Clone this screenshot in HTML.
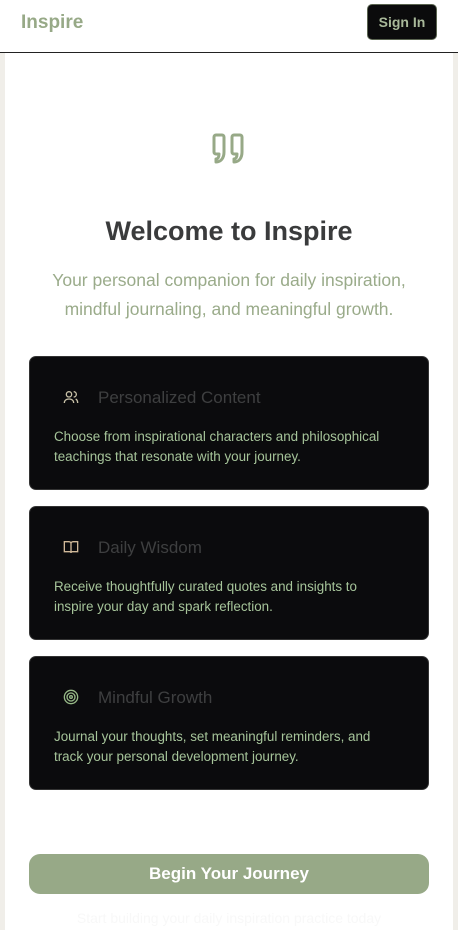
<!DOCTYPE html>
<html><head><meta charset="utf-8"><style>
*{box-sizing:border-box;margin:0;padding:0}
body{width:458px;height:930px;overflow:hidden;background:#f0eee9;font-family:"Liberation Sans",sans-serif;position:relative}
.hdr{position:absolute;left:0;top:0;width:458px;height:53px;background:#fff;border-bottom:1.5px solid #222}
.logo{position:absolute;left:21px;top:12px;font-size:19px;font-weight:bold;color:#97a987}
.sign{position:absolute;left:367px;top:4px;width:70px;height:36px;background:#0b0b0c;border:1px solid #5a6450;border-radius:5px;color:#a9b99a;font-weight:bold;font-size:14px;text-align:center;line-height:34px}
.panel{position:absolute;left:5px;top:53px;width:448px;height:877px;background:#fff}
.q{position:absolute;left:211px;top:132px}
h1{position:absolute;left:0;width:458px;top:216px;text-align:center;font-size:27px;color:#3a3b3c}
.sub{position:absolute;left:0;width:458px;top:266px;text-align:center;font-size:17.5px;line-height:29px;color:#9aab8a}
.card{position:absolute;left:29px;width:400px;height:134px;background:#0b0b0d;border-radius:7px;border:1px solid #333}
.card svg{position:absolute;left:33px;top:32px}
.ct{position:absolute;left:68px;top:31px;font-size:17px;color:#3e3f40}
.cd{position:absolute;left:24px;top:70px;width:345px;font-size:13.4px;line-height:20px;color:#a6c49a}
.btn{position:absolute;left:29px;top:854px;width:400px;height:40px;background:#97a987;border-radius:11px;color:#fff;font-weight:bold;font-size:17px;text-align:center;line-height:40px}
.foot{position:absolute;left:0;width:458px;top:910px;text-align:center;font-size:14px;color:#f8f8f8}
</style></head><body>
<div class="hdr"><div class="logo">Inspire</div><div class="sign">Sign In</div></div>
<div class="panel"></div>
<svg class="q" width="36" height="34" viewBox="0 0 36 34" fill="none" stroke="#97a987" stroke-width="3" stroke-linejoin="round" stroke-linecap="round"><path d="M5 3h6a2 2 0 012 2v15c0 6-3 10-8 10v-3c2 0 3-2 3-5H5a2 2 0 01-2-2V5a2 2 0 012-2z"/><path d="M23 3h6a2 2 0 012 2v15c0 6-3 10-8 10v-3c2 0 3-2 3-5h-3a2 2 0 01-2-2V5a2 2 0 012-2z"/></svg>
<h1>Welcome to Inspire</h1>
<div class="sub">Your personal companion for daily inspiration,<br>mindful journaling, and meaningful growth.</div>
<div class="card" style="top:356px"><svg width="16" height="16" viewBox="0 0 24 24" fill="none" stroke="#c9c2a8" stroke-width="2"><circle cx="9" cy="8" r="4"/><path d="M2 21c0-4 3-6 7-6s7 2 7 6M16 4a4 4 0 010 8M19 15c2 1 3 3 3 6"/></svg><div class="ct">Personalized Content</div><div class="cd">Choose from inspirational characters and philosophical teachings that resonate with your journey.</div></div>
<div class="card" style="top:506px"><svg width="16" height="16" viewBox="0 0 24 24" fill="none" stroke="#d0b898" stroke-width="2"><path d="M2 4h7a3 3 0 013 3v14a2 2 0 00-2-2H2zM22 4h-7a3 3 0 00-3 3v14a2 2 0 012-2h8z"/></svg><div class="ct">Daily Wisdom</div><div class="cd">Receive thoughtfully curated quotes and insights to inspire your day and spark reflection.</div></div>
<div class="card" style="top:656px"><svg width="16" height="16" viewBox="0 0 24 24" fill="none" stroke="#97b987" stroke-width="2"><circle cx="12" cy="12" r="10"/><circle cx="12" cy="12" r="6"/><circle cx="12" cy="12" r="2"/></svg><div class="ct">Mindful Growth</div><div class="cd">Journal your thoughts, set meaningful reminders, and track your personal development journey.</div></div>
<div class="btn">Begin Your Journey</div>
<div class="foot">Start building your daily inspiration practice today</div>
</body></html>
